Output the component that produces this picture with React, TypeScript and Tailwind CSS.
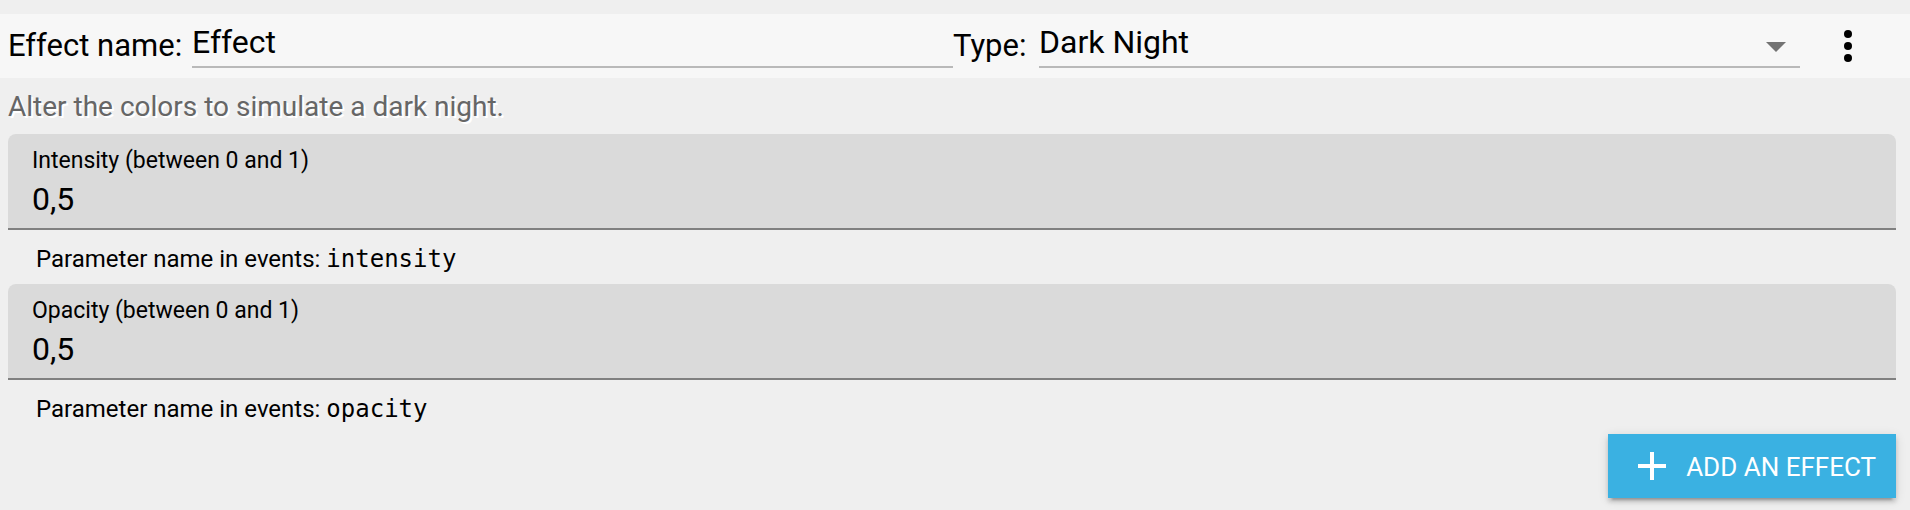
import { useState } from "react";

type Parameter = { name: string; label: string; initial: string };

const parameters: Parameter[] = [
  { name: "intensity", label: "Intensity (between 0 and 1)", initial: "0,5" },
  { name: "opacity", label: "Opacity (between 0 and 1)", initial: "0,5" },
];

function ParameterField({ name, label, initial }: Parameter) {
  const [value, setValue] = useState(initial);
  return (
    <div>
      <div className="flex h-24 flex-col rounded-t-lg border-b-2 border-[#808080] bg-[#dadada] px-6 pt-3">
        <label htmlFor={name} className="text-[23px] leading-[30px]">
          {label}
        </label>
        <input
          id={name}
          value={value}
          onChange={(e) => setValue(e.target.value)}
          className="w-full bg-transparent text-[32px] leading-[46px] outline-none"
        />
      </div>
      <p className="flex h-[54px] items-center px-7 pt-[3px] text-[24px]">
        <span className="whitespace-pre">Parameter name in events: </span>
        <code className="font-['DejaVu_Sans_Mono',monospace]">{name}</code>
      </p>
    </div>
  );
}

export default function App() {
  const [effectName, setEffectName] = useState("Effect");
  return (
    <main className="min-h-screen bg-[#efefef] pt-[14px] font-['Roboto',sans-serif] text-black">
      <header className="flex h-16 items-center bg-[#f7f7f7] pr-[14px] pl-2 text-[32px]">
        <label htmlFor="effect-name" className="w-[184px] shrink-0 text-[31px] whitespace-nowrap">
          Effect name:
        </label>
        <input
          id="effect-name"
          value={effectName}
          onChange={(e) => setEffectName(e.target.value)}
          className="mt-1 h-[50px] min-w-0 flex-1 self-start border-b-2 border-[#b9b9b9] bg-transparent outline-none"
        />
        <label htmlFor="effect-type" className="w-[86px] shrink-0 text-[31px] whitespace-nowrap">
          Type:
        </label>
        <div className="mt-1 grid h-[50px] min-w-0 flex-1 grid-cols-[1fr_48px] items-center self-start border-b-2 border-[#b9b9b9]">
          <select
            id="effect-type"
            className="col-span-2 col-start-1 row-start-1 h-12 w-full appearance-none bg-transparent outline-none"
          >
            <option>Dark Night</option>
          </select>
          <svg viewBox="0 0 48 48" className="pointer-events-none col-start-2 row-start-1 size-12" aria-hidden="true">
            <path d="M14 24h20L24 34z" fill="#737373" />
          </svg>
        </div>
        <button type="button" aria-label="Effect options" className="px-6">
          <svg viewBox="0 0 24 24" className="size-12" aria-hidden="true">
            <circle cx="12" cy="6" r="2" />
            <circle cx="12" cy="12" r="2" />
            <circle cx="12" cy="18" r="2" />
          </svg>
        </button>
      </header>

      <div className="pr-[14px] pl-2">
        <p className="flex h-14 items-center pt-0.5 text-[28px] text-[#666] [text-shadow:2px_2px_0_#fff]">
          Alter the colors to simulate a dark night.
        </p>
        {parameters.map((parameter) => (
          <ParameterField key={parameter.name} {...parameter} />
        ))}
        <div className="flex justify-end">
          <button
            type="button"
            className="flex h-16 items-center gap-2.5 bg-[#3ab1e2] px-5 text-[26px] text-white shadow-[0_6px_2px_-4px_rgba(0,0,0,0.2),0_4px_4px_rgba(0,0,0,0.14),0_2px_10px_rgba(0,0,0,0.12)]"
          >
            <svg viewBox="0 0 24 24" className="size-12" fill="currentColor" aria-hidden="true">
              <path d="M19 13h-6v6h-2v-6H5v-2h6V5h2v6h6z" />
            </svg>
            <span className="pt-0.5">ADD AN EFFECT</span>
          </button>
        </div>
      </div>
    </main>
  );
}
